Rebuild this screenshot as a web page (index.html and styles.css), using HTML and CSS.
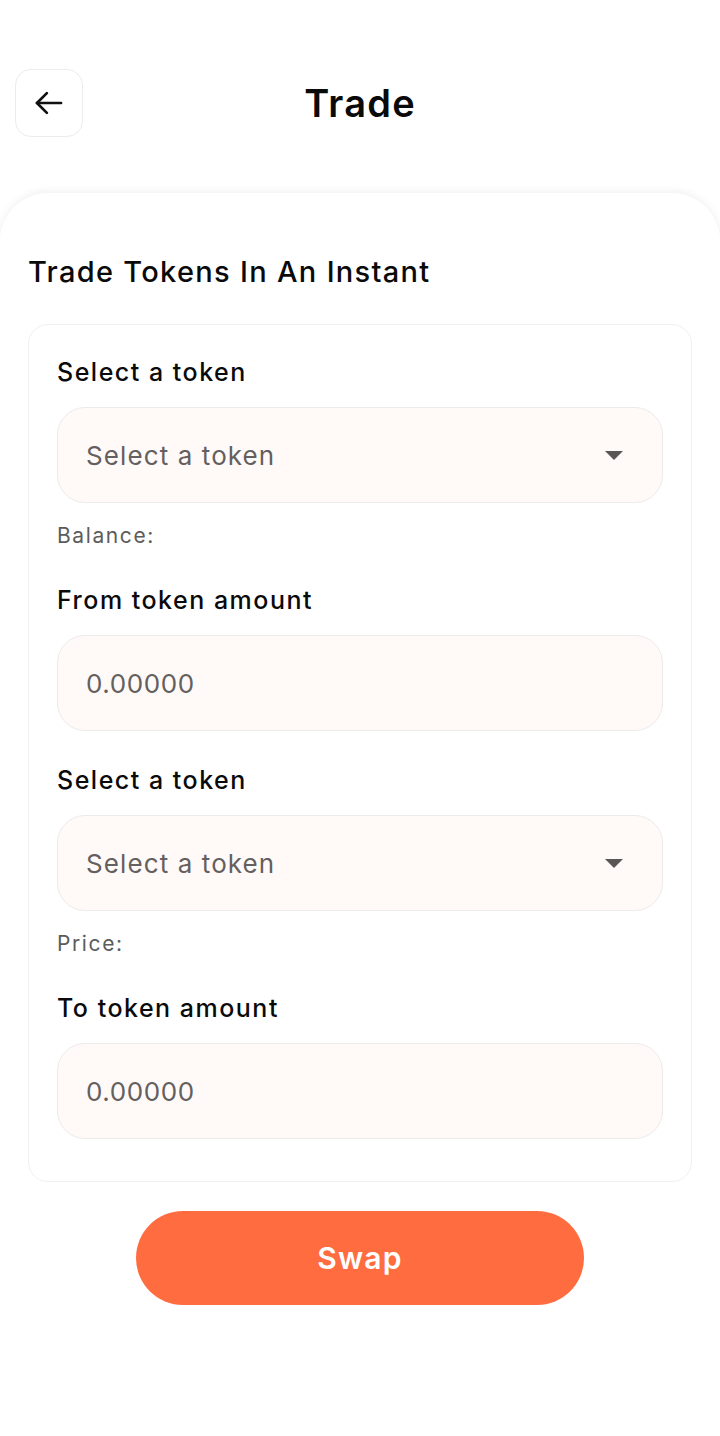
FILE: index.html
```html
<!DOCTYPE html>
<html lang="en">
<head>
<meta charset="utf-8">
<title>Trade</title>
<link rel="stylesheet" href="styles.css">
</head>
<body>
<div class="page">
  <header class="topbar">
    <button class="back" aria-label="Back">
      <svg width="34" height="34" viewBox="0 0 24 24" fill="none" stroke="#111" stroke-width="1.9" stroke-linecap="round" stroke-linejoin="round"><path d="M20.5 12H3.5"/><path d="M10.5 5l-7 7 7 7"/></svg>
    </button>
    <h1 class="title">Trade</h1>
    <div class="spacer"></div>
  </header>
  <main class="card">
    <h2 class="heading">Trade Tokens In An Instant</h2>
    <section class="box">
      <div class="label">Select a token</div>
      <div class="control select">
        <span class="placeholder">Select a token</span>
        <span class="caret"></span>
      </div>
      <div class="hint">Balance:</div>
      <div class="label gap-big">From token amount</div>
      <div class="control"><span class="placeholder num">0.00000</span></div>
      <div class="label gap-big">Select a token</div>
      <div class="control select">
        <span class="placeholder">Select a token</span>
        <span class="caret"></span>
      </div>
      <div class="hint">Price:</div>
      <div class="label gap-big">To token amount</div>
      <div class="control"><span class="placeholder num">0.00000</span></div>
    </section>
    <div class="actions">
      <button class="swap">Swap</button>
    </div>
  </main>
</div>
</body>
</html>
```
FILE: styles.css
```css
* { box-sizing: border-box; }
html, body { margin: 0; padding: 0; background: #ffffff; }
body { font-family: "Inter", "Noto Sans", sans-serif; color: #0a0a0a; }
.page { min-height: 1436px; display: flex; flex-direction: column; overflow: hidden; }
.topbar {
  display: flex; align-items: center; justify-content: space-between;
  padding: 69px 15px 0 15px; height: 137px;
}
.back {
  width: 68px; height: 68px; border: 1px solid #ececec; border-radius: 16px;
  background: #fff; display: flex; align-items: center; justify-content: center; padding: 0;
}
.title { margin: 0; font-size: 38px; font-weight: 600; letter-spacing: 1.2px; line-height: 68px; }
.spacer { width: 68px; height: 68px; }
.card {
  margin-top: 56px; flex: 1; background: #fff;
  border-radius: 48px 48px 0 0;
  box-shadow: 0 -2px 8px rgba(0,0,0,0.06);
  padding: 59px 28px 40px 28px;
}
.heading { margin: 0; font-size: 29px; font-weight: 500; line-height: 40px; letter-spacing: 1.3px; }
.box {
  margin-top: 32px; border: 1px solid #f0f0f0; border-radius: 20px;
  padding: 29px 28px 42px 28px; display: flex; flex-direction: column;
}
.label { font-size: 25px; font-weight: 500; line-height: 36px; letter-spacing: 1.5px; }
.gap-big { margin-top: 31px; }
.control {
  margin-top: 17px; height: 96px; border: 1.5px solid #eeeaea; border-radius: 28px;
  background: #fffaf8; display: flex; align-items: center; padding: 0 28px;
}
.placeholder { font-size: 26px; color: #646060; font-weight: 400; letter-spacing: 1.1px; }
.placeholder.num { letter-spacing: 0.6px; }
.select { justify-content: space-between; padding-right: 39px; }
.caret {
  width: 0; height: 0; border-left: 9px solid transparent; border-right: 9px solid transparent;
  border-top: 9px solid #5a5656;
}
.hint { margin-top: 18px; font-size: 21px; color: #5c5c5c; line-height: 30px; letter-spacing: 1.6px; }
.actions { display: flex; justify-content: center; margin-top: 29px; }
.swap {
  width: 448px; height: 94px; border: none; border-radius: 47px; background: #ff6c40;
  color: #fff; font-family: "Inter", "Noto Sans", sans-serif; font-size: 30px; font-weight: 600;
  letter-spacing: 1.2px;
}
```
